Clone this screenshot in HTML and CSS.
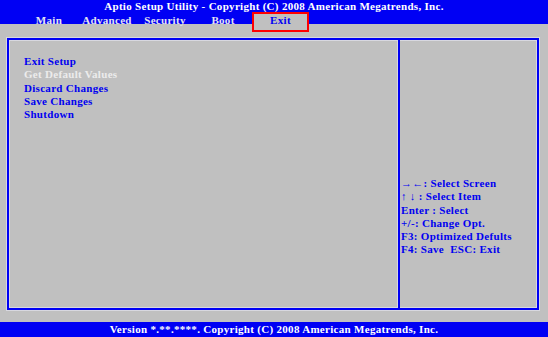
FILE: index.html
```html
<!DOCTYPE html>
<html>
<head>
<meta charset="utf-8">
<link rel="stylesheet" href="styles.css">
</head>
<body>
<div class="header">
  <div class="title">Aptio Setup Utility - Copyright (C) 2008 American Megatrends, Inc.</div>
  <div class="tabs">
    <div class="tab">Main</div>
    <div class="tab">Advanced</div>
    <div class="tab">Security</div>
    <div class="tab">Boot</div>
    <div class="tab active">Exit<span class="mark"></span></div>
  </div>
</div>
<div class="frame">
  <div class="panel">
    <div class="item">Exit Setup</div>
    <div class="item dim">Get Default Values</div>
    <div class="item">Discard Changes</div>
    <div class="item">Save Changes</div>
    <div class="item">Shutdown</div>
  </div>
  <div class="help">
    <div class="hline">&rarr;&larr;: Select Screen</div>
    <div class="hline">&uarr; &darr; : Select Item</div>
    <div class="hline">Enter : Select</div>
    <div class="hline">+/-: Change Opt.</div>
    <div class="hline">F3: Optimized Defults</div>
    <div class="hline">F4: Save &nbsp;ESC: Exit</div>
  </div>
</div>
<div class="footer">Version *.**.****. Copyright (C) 2008 American Megatrends, Inc.</div>
</body>
</html>
```
FILE: styles.css
```css
html, body {
  margin: 0;
  padding: 0;
}
body {
  width: 548px;
  height: 337px;
  background: #c0c0c0;
  font-family: "Liberation Serif", serif;
  font-weight: bold;
  font-size: 11px;
  letter-spacing: 0.3px;
  overflow: hidden;
}
.header {
  background: #0000f4;
  height: 24px;
  color: #f0f0f0;
}
.title {
  height: 12px;
  line-height: 13px;
  text-align: center;
  color: #ffffff;
}
.tabs {
  display: flex;
  padding-left: 20px;
  height: 12px;
}
.tab {
  width: 58px;
  text-align: center;
  line-height: 16px;
  height: 12px;
  color: #e4e4f0;
  position: relative;
}
.tab.active {
  background: #c0c0c0;
  color: #0000f4;
  width: 57px;
}
.mark {
  position: absolute;
  left: 0;
  top: 0;
  width: 53px;
  height: 16px;
  border: 2px solid #ff0000;
}
.frame {
  margin: 14px 0 0 7px;
  width: 528px;
  height: 268px;
  border: 2px solid #0000f4;
  box-shadow: 0 0 0 1px #d8d8e0, inset 0 0 0 1px #d8d8e0;
  display: flex;
}
.panel {
  width: 374px;
  padding: 15px 0 0 15px;
}
.item {
  line-height: 13.3px;
  height: 13.3px;
  color: #0000f0;
}
.item.dim {
  color: #ececec;
}
.help {
  flex: 1;
  border-left: 2px solid #0000f4;
  box-shadow: -1px 0 0 #d8d8e0;
  padding: 137px 0 0 1px;
}
.hline {
  line-height: 13.3px;
  height: 13.3px;
  color: #0000f0;
  white-space: nowrap;
}
.footer {
  margin-top: 12px;
  background: #0000f4;
  height: 15px;
  line-height: 15px;
  text-align: center;
  color: #ffffff;
}
```
